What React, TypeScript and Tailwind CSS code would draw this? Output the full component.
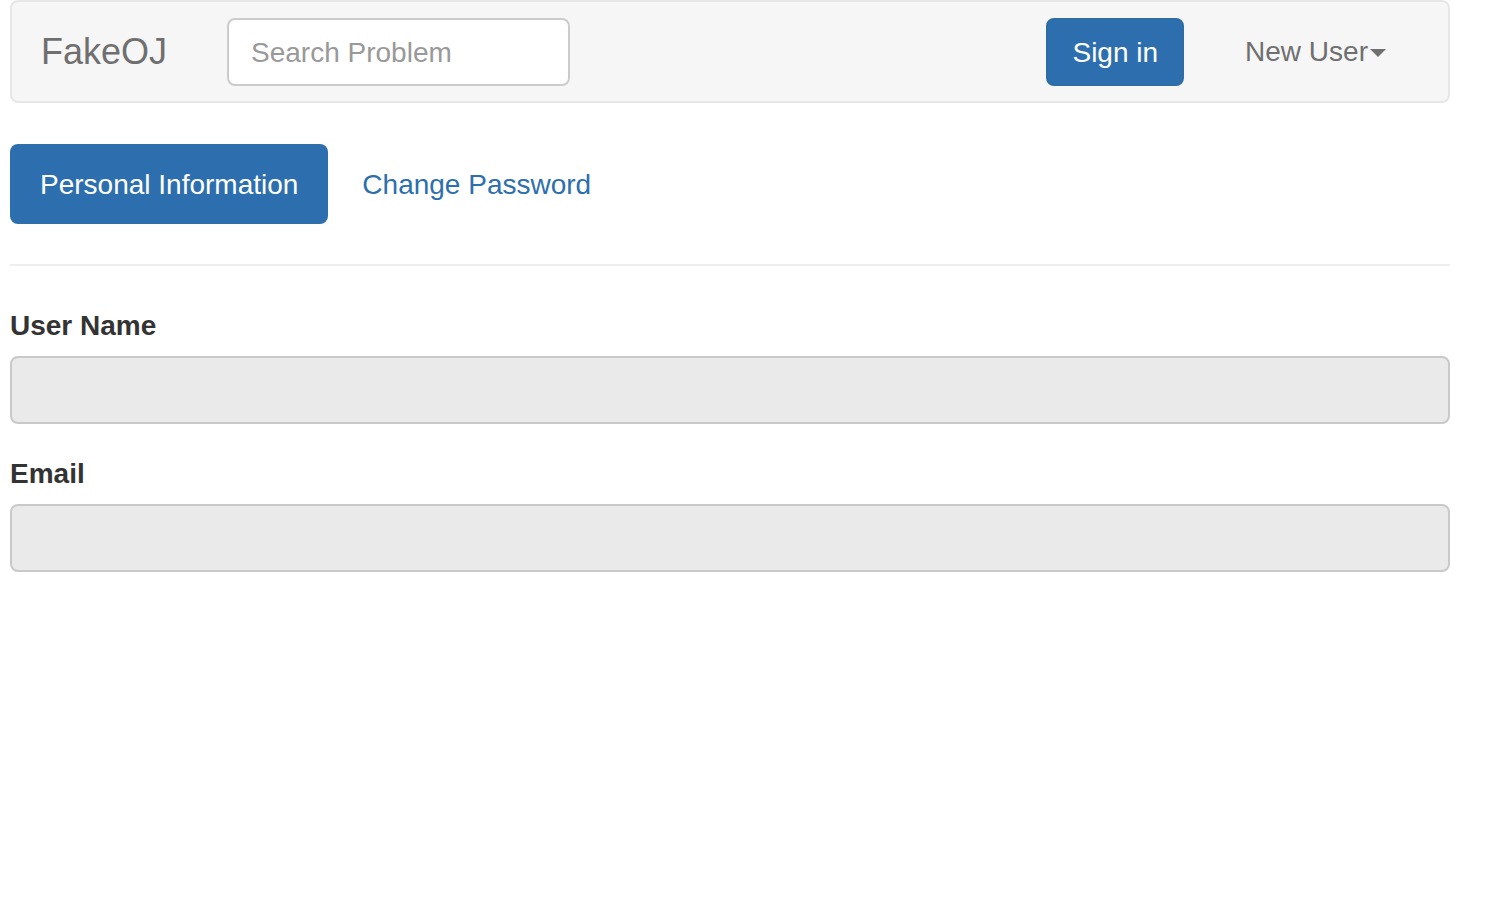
export default function App() {
  return (
    <div className="min-h-screen bg-white text-[28px] leading-[40px] text-[#333]" style={{ fontFamily: '"Liberation Sans", Arial, Helvetica, sans-serif' }}>
      <div className="ml-[10px] w-[1440px]">
        <nav className="flex h-[103px] items-start rounded-[8px] border-2 border-[#e7e7e7] bg-[#f6f6f6]">
          <a className="ml-[29px] mt-[30px] text-[36px] leading-[40px] text-[#6f6f6f]">FakeOJ</a>
          <input
            placeholder="Search Problem"
            className="ml-[60px] mt-[16px] h-[68px] w-[343px] rounded-[8px] border-2 border-[#cccccc] bg-white px-[22px] pt-[2px] text-[28px] text-[#555] outline-none placeholder:text-[#999]"
          />
          <button className="ml-auto mt-[16px] h-[68px] rounded-[8px] border-2 border-[#2e6da4] bg-[#2d6fae] px-[24px] pt-[2px] text-[28px] text-white">
            Sign in
          </button>
          <a className="ml-[61px] mr-[62px] mt-[30px] flex items-center text-[28px] leading-[40px] text-[#6f6f6f]">
            New User
            <span className="ml-[2px] mt-[2px] inline-block h-0 w-0 border-x-[8px] border-t-[8px] border-x-transparent border-t-[#6f6f6f]" />
          </a>
        </nav>

        <div className="mt-[41px] flex">
          <a className="h-[80px] rounded-[8px] bg-[#2d6fae] px-[30px] pb-[19px] pt-[21px] text-white">Personal Information</a>
          <a className="ml-[4px] h-[80px] px-[30px] pb-[19px] pt-[21px] text-[#2d6fae]">Change Password</a>
        </div>

        <hr className="mt-[40px] border-t-2 border-[#eeeeee]" />

        <form className="mt-[40px]">
          <div className="mb-[30px]">
            <label className="mb-[10px] block font-bold leading-[40px] text-[#333]">User Name</label>
            <input disabled className="block h-[68px] w-full rounded-[8px] border-2 border-[#c9c9c9] bg-[#ebeaea]" />
          </div>
          <div>
            <label className="mb-[10px] block font-bold leading-[40px] text-[#333]">Email</label>
            <input disabled className="block h-[68px] w-full rounded-[8px] border-2 border-[#c9c9c9] bg-[#ebeaea]" />
          </div>
        </form>
      </div>
    </div>
  );
}
